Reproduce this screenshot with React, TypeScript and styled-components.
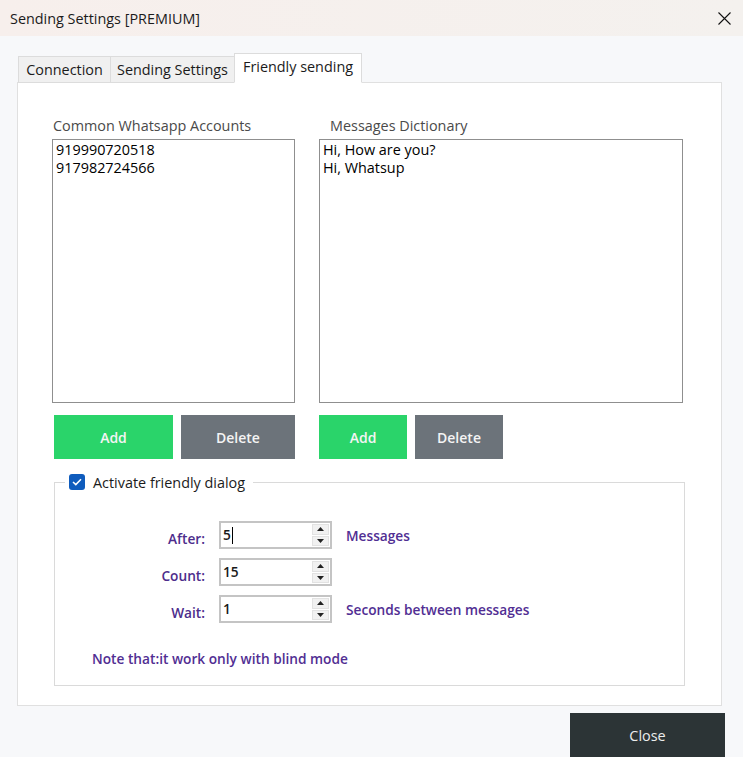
import React from 'react';
import styled, { createGlobalStyle } from 'styled-components';

const Global = createGlobalStyle`
	html, body {
		margin: 0;
		padding: 0;
		background: #f7f8fa;
	}
	* {
		box-sizing: border-box;
	}
`;

const Window = styled.div`
	width: 743px;
	height: 757px;
	display: flex;
	flex-direction: column;
	background: #f7f8fa;
	font-family: 'Open Sans', 'Noto Sans', sans-serif;
	font-size: 14.4px;
	color: #1a1a1a;
	overflow: hidden;
`;

const TitleBar = styled.div`
	height: 36px;
	flex: none;
	display: flex;
	align-items: center;
	justify-content: space-between;
	padding: 0 10px;
	background: linear-gradient(90deg, #f7efec 0%, #f4f1ee 100%);
	font-size: 14.4px;
	color: #1b1b1b;
`;

const CloseX = styled.button`
	border: none;
	background: transparent;
	padding: 0;
	width: 16px;
	height: 16px;
	display: flex;
	align-items: center;
	justify-content: center;
	margin-right: 1px;
`;

const Body = styled.div`
	flex: 1;
	display: flex;
	flex-direction: column;
	padding: 17px 21px 0 17px;
`;

const TabStrip = styled.div`
	display: flex;
	align-items: flex-end;
	height: 30px;
	margin-left: 2px;
	position: relative;
	z-index: 1;
	margin-bottom: -1px;
`;

const Tab = styled.div<{ $active?: boolean; $w: number }>`
	width: ${(p) => p.$w}px;
	height: ${(p) => (p.$active ? 30 : 27)}px;
	display: flex;
	align-items: center;
	justify-content: center;
	padding-bottom: ${(p) => (p.$active ? 3 : 0)}px;
	background: ${(p) => (p.$active ? '#ffffff' : '#f0f0f0')};
	border: 1px solid #dcdcdc;
	border-bottom: ${(p) => (p.$active ? '1px solid #ffffff' : '1px solid #dcdcdc')};
	margin-left: -1px;
	font-size: 14.4px;
	color: #1b1b1b;
	white-space: nowrap;
`;

const Panel = styled.div`
	height: 624px;
	background: #ffffff;
	border: 1px solid #e0e0e0;
	padding: 33px 38px 0 34px;
	display: flex;
	flex-direction: column;
`;

const Columns = styled.div`
	display: flex;
	gap: 24px;
`;

const Column = styled.div<{ $w: number }>`
	width: ${(p) => p.$w}px;
	display: flex;
	flex-direction: column;
`;

const ColumnLabel = styled.div<{ $indent: number }>`
	height: 23px;
	padding-left: ${(p) => p.$indent}px;
	font-size: 14.4px;
	color: #4a4a4a;
	line-height: 20px;
	white-space: nowrap;
`;

const ListBox = styled.div`
	height: 264px;
	border: 1px solid #8f8f8f;
	padding: 1px 3px;
	font-size: 14.4px;
	line-height: 18px;
	color: #000;
	background: #fff;
`;

const ButtonRow = styled.div<{ $indent: number }>`
	display: flex;
	gap: 8px;
	margin-top: 12px;
	padding-left: ${(p) => p.$indent}px;
`;

const ActionButton = styled.button<{ $kind: 'add' | 'delete'; $w: number }>`
	width: ${(p) => p.$w}px;
	height: 44px;
	border: none;
	background: ${(p) => (p.$kind === 'add' ? '#2ad46a' : '#6c737a')};
	color: #f4f4f4;
	font-family: 'Open Sans', 'Noto Sans', sans-serif;
	font-size: 14px;
	font-weight: 600;
	padding: 0;
`;

const Group = styled.fieldset`
	margin: 14px 0 0 2px;
	width: 631px;
	height: 213px;
	border: 1px solid #dadada;
	padding: 0;
	display: flex;
	flex-direction: column;
`;

const Legend = styled.legend`
	margin-left: 10px;
	padding: 0 8px 0 4px;
	display: flex;
	align-items: center;
	gap: 8px;
	font-size: 14.4px;
	color: #1b1b1b;
	height: 18px;
`;

const CheckBox = styled.span`
	width: 16px;
	height: 16px;
	border-radius: 3px;
	background: #0f5cbd;
	display: flex;
	align-items: center;
	justify-content: center;
`;

const FieldRows = styled.div`
	display: flex;
	flex-direction: column;
	gap: 9px;
	margin-top: 30px;
`;

const FieldRow = styled.div`
	display: flex;
	align-items: center;
	height: 28px;
`;

const FieldLabel = styled.div`
	width: 164px;
	padding-right: 14px;
	text-align: right;
	font-size: 13.7px;
	font-weight: 600;
	color: #4d2d8c;
	padding-top: 6px;
`;

const Spin = styled.div`
	width: 113px;
	height: 28px;
	border: 2px solid #c4c4c4;
	display: flex;
	background: #fff;
`;

const SpinValue = styled.div`
	flex: 1;
	padding: 0 2px;
	font-size: 13.7px;
	font-weight: 600;
	color: #1a1a1a;
	line-height: 22px;
	display: flex;
	align-items: center;
`;

const Caret = styled.span`
	width: 1px;
	height: 17px;
	background: #000;
	margin-left: 1px;
`;

const SpinButtons = styled.div`
	width: 17px;
	margin: 1px 1px 1px 0;
	display: flex;
	flex-direction: column;
	gap: 1px;
`;

const SpinButton = styled.div`
	flex: 1;
	background: #f1f1f1;
	border: 1px solid #e2e2e2;
	display: flex;
	align-items: center;
	justify-content: center;
`;

const FieldHint = styled.div`
	margin-left: 14px;
	font-size: 13.7px;
	font-weight: 600;
	color: #512e93;
`;

const Note = styled.div`
	margin: 26px 0 0 37px;
	font-size: 13.7px;
	font-weight: 600;
	color: #512e93;
`;

const Footer = styled.div`
	display: flex;
	justify-content: flex-end;
	margin-top: 7px;
	margin-right: -3px;
`;

const CloseButton = styled.button`
	width: 155px;
	height: 45px;
	border: none;
	background: #2c3436;
	color: #ededed;
	font-family: 'Open Sans', 'Noto Sans', sans-serif;
	font-size: 14.4px;
	padding: 0;
`;

const Arrow = ({ up }: { up?: boolean }) => (
	<svg width="7" height="4" viewBox="0 0 7 4">
		<polygon points={up ? '0,4 7,4 3.5,0' : '0,0 7,0 3.5,4'} fill="#222" />
	</svg>
);

const Spinner = ({ value, caret }: { value: string; caret?: boolean }) => (
	<Spin>
		<SpinValue>
			{value}
			{caret && <Caret />}
		</SpinValue>
		<SpinButtons>
			<SpinButton>
				<Arrow up />
			</SpinButton>
			<SpinButton>
				<Arrow />
			</SpinButton>
		</SpinButtons>
	</Spin>
);

export default function App() {
	return (
		<Window>
			<Global />
			<TitleBar>
				<span>Sending Settings [PREMIUM]</span>
				<CloseX aria-label="Close">
					<svg width="13" height="13" viewBox="0 0 13 13">
						<path d="M0.5 0.5 L12.5 12.5 M12.5 0.5 L0.5 12.5" stroke="#111" strokeWidth="1.1" />
					</svg>
				</CloseX>
			</TitleBar>
			<Body>
				<TabStrip>
					<Tab $w={93}>Connection</Tab>
					<Tab $w={125}>Sending Settings</Tab>
					<Tab $w={128} $active>
						Friendly sending
					</Tab>
				</TabStrip>
				<Panel>
					<Columns>
						<Column $w={243}>
							<ColumnLabel $indent={1}>Common Whatsapp Accounts</ColumnLabel>
							<ListBox>
								<div>919990720518</div>
								<div>917982724566</div>
							</ListBox>
							<ButtonRow $indent={2}>
								<ActionButton $kind="add" $w={120}>
									Add
								</ActionButton>
								<ActionButton $kind="delete" $w={115}>
									Delete
								</ActionButton>
							</ButtonRow>
						</Column>
						<Column $w={364}>
							<ColumnLabel $indent={11}>Messages Dictionary</ColumnLabel>
							<ListBox>
								<div>Hi, How are you?</div>
								<div>Hi, Whatsup</div>
							</ListBox>
							<ButtonRow $indent={0}>
								<ActionButton $kind="add" $w={88}>
									Add
								</ActionButton>
								<ActionButton $kind="delete" $w={88}>
									Delete
								</ActionButton>
							</ButtonRow>
						</Column>
					</Columns>
					<Group>
						<Legend>
							<CheckBox>
								<svg width="10" height="8" viewBox="0 0 10 8">
									<path d="M1 4 L3.8 6.6 L9 1.2" stroke="#fff" strokeWidth="1.5" fill="none" />
								</svg>
							</CheckBox>
							Activate friendly dialog
						</Legend>
						<FieldRows>
							<FieldRow>
								<FieldLabel>After:</FieldLabel>
								<Spinner value="5" caret />
								<FieldHint>Messages</FieldHint>
							</FieldRow>
							<FieldRow>
								<FieldLabel>Count:</FieldLabel>
								<Spinner value="15" />
							</FieldRow>
							<FieldRow>
								<FieldLabel>Wait:</FieldLabel>
								<Spinner value="1" />
								<FieldHint>Seconds between messages</FieldHint>
							</FieldRow>
						</FieldRows>
						<Note>Note that:it work only with blind mode</Note>
					</Group>
				</Panel>
				<Footer>
					<CloseButton>Close</CloseButton>
				</Footer>
			</Body>
		</Window>
	);
}
